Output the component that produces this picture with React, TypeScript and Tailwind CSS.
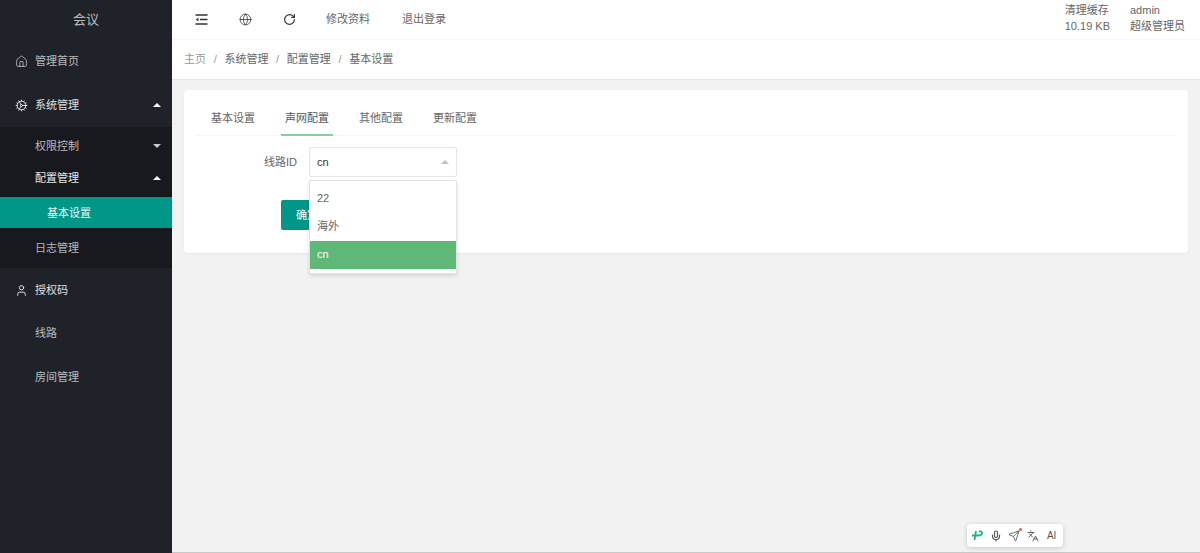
import { Cog, Globe, Home, Languages, Mic, RotateCw, Send, User } from 'lucide-react';

const FONT = '[font-family:"Liberation_Sans","Noto_Sans_CJK_SC",sans-serif]';

function Caret({ up, color = 'border-b-white' }: { up?: boolean; color?: string }) {
  if (up) return <span className={`h-0 w-0 border-x-[4.5px] border-b-[4.5px] border-x-transparent ${color}`} />;
  return <span className="h-0 w-0 border-x-[4.5px] border-t-[4.5px] border-x-transparent border-t-[#c9c9cb]" />;
}

function SideChild({ label, className = '' }: { label: string; className?: string }) {
  return <div className={`flex items-center pl-[35px] pr-[11px] text-white/70 ${className}`}>{label}</div>;
}

function Sidebar() {
  return (
    <aside className="flex w-[172px] shrink-0 flex-col bg-[#20222a] text-[11px]">
      <div className="flex h-[39px] items-center justify-center text-[13px] text-white/70">会议</div>
      <div className="flex h-[44px] items-center pl-[15px] text-white/70">
        <Home size={13} strokeWidth={1.5} className="mr-[7px]" />
        管理首页
      </div>
      <div className="flex h-[44px] items-center justify-between pl-[15px] pr-[11px] text-white/85">
        <span className="flex items-center">
          <Cog size={13} strokeWidth={1.7} className="mr-[7px]" />
          系统管理
        </span>
        <Caret up />
      </div>
      <div className="flex flex-col bg-[#18191f]">
        <div className="flex h-[38px] items-center justify-between pl-[35px] pr-[11px] text-white/70">
          权限控制
          <Caret />
        </div>
        <div className="mb-[6px] flex h-[26px] items-center justify-between pl-[35px] pr-[11px] text-white/90">
          配置管理
          <Caret up />
        </div>
        <div className="flex h-[31px] items-center bg-[#009688] pl-[47px] pt-[1px] text-white/90">基本设置</div>
        <SideChild label="日志管理" className="h-[40px]" />
      </div>
      <div className="flex h-[43px] items-center pl-[15px] pt-[1px] text-white/85">
        <User size={13} strokeWidth={1.8} className="mr-[7px]" />
        授权码
      </div>
      <SideChild label="线路" className="h-[44px]" />
      <SideChild label="房间管理" className="h-[44px]" />
    </aside>
  );
}

function TopBar() {
  return (
    <header className="flex h-[40px] shrink-0 items-center justify-between border-b border-[#f6f6f6] bg-white pl-[8px] pr-[15px] text-[11px] text-[#666]">
      <div className="flex items-center">
        <span className="-ml-[1px] flex w-[44px] justify-center text-[#333]">
          <svg width="13" height="13" viewBox="0 0 13 13" fill="none" stroke="currentColor" strokeWidth="1.4">
            <path d="M0.5 2h12M5 6.5h7.5M0.5 11h12" />
            <path d="M3.5 4.5 0.8 6.5l2.7 2z" fill="currentColor" stroke="none" />
          </svg>
        </span>
        <span className="flex w-[44px] justify-center text-[#444]">
          <Globe size={13} strokeWidth={1.6} />
        </span>
        <span className="flex w-[44px] justify-center text-[#333]">
          <RotateCw size={13} strokeWidth={2.2} />
        </span>
        <span className="pl-[15px] pr-[16px]">修改资料</span>
        <span className="px-[16px]">退出登录</span>
      </div>
      <div className="flex gap-[20px] pb-[3px] leading-[16px]">
        <div>
          <div>清理缓存</div>
          <div>10.19 KB</div>
        </div>
        <div>
          <div>admin</div>
          <div>超级管理员</div>
        </div>
      </div>
    </header>
  );
}

function Breadcrumb() {
  const items = ['系统管理', '配置管理', '基本设置'];
  return (
    <div className="flex h-[40px] shrink-0 items-center border-b border-[#e6e6e6] bg-white pl-[12px] text-[11px] text-[#666]">
      <span className="text-[#999]">主页</span>
      {items.map((item) => (
        <span key={item} className="flex items-center">
          <span className="w-[18.4px] text-center text-[#999]">/</span>
          {item}
        </span>
      ))}
    </div>
  );
}

function ConfigCard() {
  const tabs = ['基本设置', '声网配置', '其他配置', '更新配置'];
  return (
    <section className="mx-[12px] mt-[10px] h-[163px] rounded-sm bg-white px-[12px] pt-[10px] shadow-[0_1px_2px_rgba(0,0,0,0.05)]">
      <div className="flex h-[36px] border-b border-[#f6f6f6] text-[11px] text-[#666]">
        {tabs.map((tab) => (
          <div key={tab} className="flex h-[36px] items-center px-[15px]">
            <span
              className={`-mx-[4px] flex h-full items-center border-b-2 px-[4px] pt-[3px] ${
                tab === '声网配置' ? 'border-[#8ccb9b] text-[#555]' : 'border-transparent'
              }`}
            >
              {tab}
            </span>
          </div>
        ))}
      </div>
      <div className="relative mt-[11px] text-[11px]">
        <div className="flex items-center">
          <label className="w-[113px] pr-[12px] text-right text-[#666]">线路ID</label>
          <div className="flex h-[30px] w-[148px] items-center justify-between rounded-[2px] border border-[#e6e6e6] bg-white px-[7px] text-[#333]">
            cn
            <Caret up color="border-b-[#c2c2c2]" />
          </div>
        </div>
        <button className="ml-[85px] mt-[23px] block h-[30px] w-[70px] rounded-[2px] bg-[#009688] pr-[18px] text-[11px] text-white">
          确定
        </button>
        <ul className="absolute left-[113px] top-[33px] z-10 w-[148px] rounded-[2px] border border-[#e2e2e2] bg-white py-[4px] text-[#666] shadow-[0_2px_4px_rgba(0,0,0,0.12)]">
          <li className="flex h-[28px] items-center pb-[2px] pl-[7px]">22</li>
          <li className="flex h-[28px] items-center pb-[2px] pl-[7px]">海外</li>
          <li className="flex h-[28px] items-center bg-[#5fb878] pb-[2px] pl-[7px] text-white">cn</li>
        </ul>
      </div>
    </section>
  );
}

function FloatBar() {
  return (
    <div className="absolute bottom-[6px] right-[137px] flex h-[23px] w-[96px] items-center rounded-[4px] bg-white pl-[1px] text-[#555] shadow-[0_1px_5px_rgba(0,0,0,0.18)]">
      <span className="flex w-[18.6px] justify-center">
        <svg width="12" height="11" viewBox="0 0 12 11" fill="none" stroke="#12b886" strokeWidth="1.8">
          <path d="M5 1 3.5 10M1 5.5h6C10 5.5 11 4.5 11 3S9.5 1 8 1.5" />
        </svg>
      </span>
      <span className="flex w-[18.6px] justify-center">
        <Mic size={12} strokeWidth={2.4} />
      </span>
      <span className="relative flex w-[18.6px] justify-center">
        <Send size={12} strokeWidth={1.7} />
        <span className="absolute right-[2px] -top-[2px] h-[3px] w-[3px] rounded-full bg-[#f25555]" />
      </span>
      <span className="flex w-[18.6px] justify-center">
        <Languages size={12} strokeWidth={1.8} />
      </span>
      <span className="flex w-[18.6px] justify-center text-[10px] font-medium">AI</span>
    </div>
  );
}

export default function App() {
  return (
    <div className={`relative flex h-[553px] w-[1200px] overflow-hidden bg-[#f2f2f2] ${FONT}`}>
      <Sidebar />
      <main className="flex min-w-0 flex-1 flex-col border-b border-[#c8c8c8]">
        <TopBar />
        <Breadcrumb />
        <ConfigCard />
      </main>
      <FloatBar />
    </div>
  );
}
